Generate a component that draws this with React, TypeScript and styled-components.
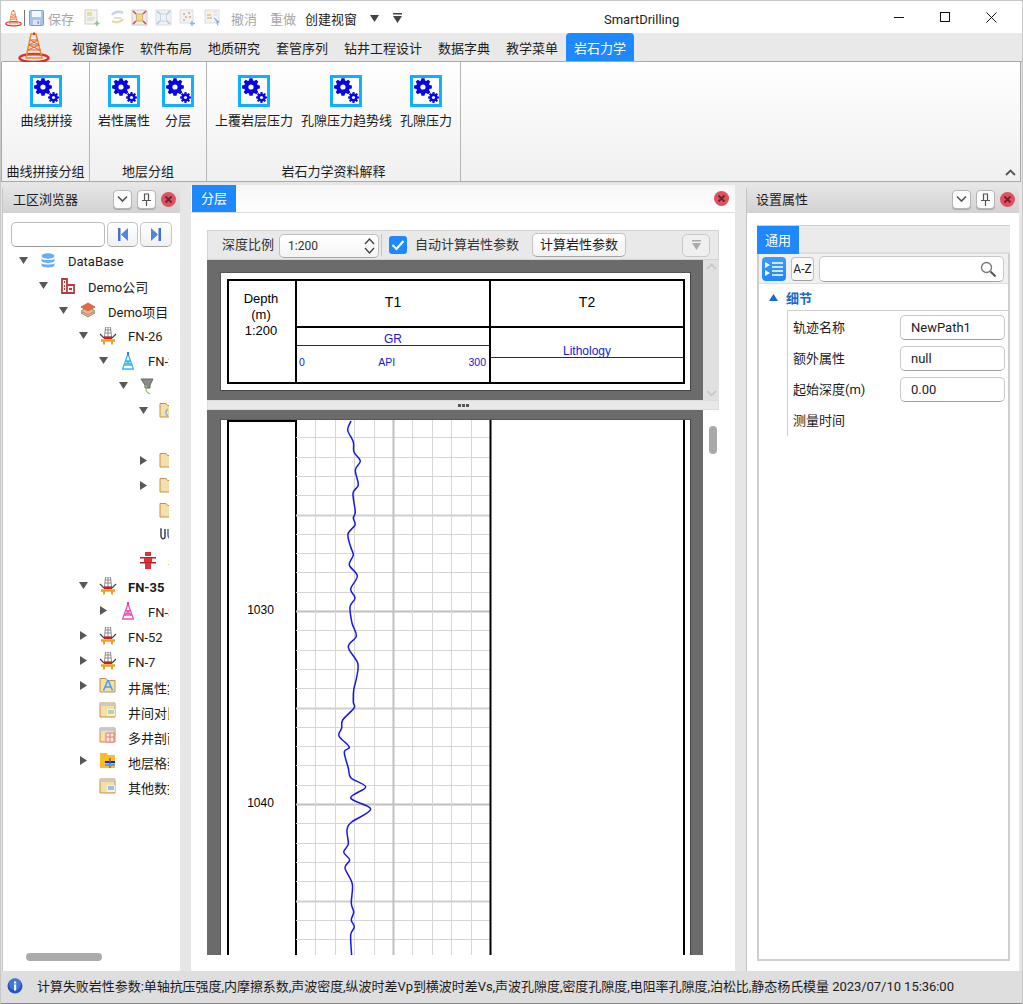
import React from "react";
import styled, { createGlobalStyle } from "styled-components";

const UI = `Roboto, "Noto Sans CJK SC", sans-serif`;
const BLUE = "#1e88ff";

const Global = createGlobalStyle`
  html, body { margin: 0; padding: 0; background: #e6e6e6; }
  * { box-sizing: border-box; }
  #root { width: 1023px; height: 1004px; overflow: hidden; }
`;

const Win = styled.div`
  width: 1023px; height: 1004px; display: flex; flex-direction: column;
  background: #e6e6e6; font: 13px ${UI}; color: #1c1c1c;
  border-top: 1px solid #c8c8c8; border-left: 1px solid #c8c8c8; border-right: 1px solid #c8c8c8;
  overflow: hidden;
`;
const TitleBar = styled.div`
  height: 32px; flex: none; background: #fff; display: flex; align-items: center;
`;
const Qat = styled.div`
  width: 603px; flex: none; display: flex; align-items: center; height: 100%; padding-left: 4px; padding-top: 2px;
`;
const QatSep = styled.span`width: 1px; height: 16px; background: #777; margin: 0 4px 0 2px;`;
const QatText = styled.span<{ $on?: boolean; $l: number }>`
  color: ${p => (p.$on ? "#222" : "#a8a8a8")}; margin-left: ${p => p.$l}px; white-space: nowrap;
`;
const QatIcon = styled.span<{ $l: number }>`
  margin-left: ${p => p.$l}px; display: flex;
`;
const Title = styled.div`font-size: 13px; color: #222; padding-top: 5px;`;
const WinCtrls = styled.div`margin-left: auto; display: flex; align-items: center; height: 100%; padding-right: 8px;`;
const WinBtn = styled.span<{ $w: number }>`width: ${p => p.$w}px; display: flex; justify-content: center;`;

const Menu = styled.div`
  height: 29px; flex: none; background: #e9e9e9; display: flex; align-items: stretch; margin-left: 1px;
  border-bottom: 1px solid #a9a9a9; padding-left: 16px;
`;
const LogoSlot = styled.div`width: 46px; flex: none; display: flex; align-items: center; margin-bottom: -2px;`;
const MenuItem = styled.div<{ $on?: boolean }>`
  padding: 0 8px; display: flex; align-items: center; border-radius: 4px 4px 0 0; white-space: nowrap;
  color: ${p => (p.$on ? "#fff" : "#1c1c1c")}; background: ${p => (p.$on ? BLUE : "transparent")};
`;

const Ribbon = styled.div`
  height: 120px; flex: none; display: flex; margin-right: 1px; position: relative;
  background: linear-gradient(#fff, #f0f0f0);
  border-bottom: 1px solid #a9a9a9; border-right: 1px solid #a9a9a9; border-left: 1px solid #a9a9a9;
`;
const Group = styled.div<{ $w: number }>`
  width: ${p => p.$w}px; flex: none; border-right: 1px solid #b5b5b5; display: flex; flex-direction: column;
`;
const GroupBody = styled.div<{ $shift?: number }>`
  flex: 1; display: flex; justify-content: center; gap: 8px; padding: 13px 0 0 ${p => p.$shift ?? 0}px;
`;
const GroupName = styled.div`height: 20px; flex: none; text-align: center; line-height: 22px; white-space: nowrap;`;
const RBtn = styled.div`
  min-width: 40px; display: flex; flex-direction: column; align-items: center; gap: 3px; white-space: nowrap;
`;
const Collapse = styled.span`position: absolute; right: 4px; bottom: 5px; display: flex;`;

const Body = styled.div`
  flex: 1; min-height: 0; display: flex; padding: 3px 3px 0 1px; gap: 11px;
`;
const Side = styled.div<{ $w: number }>`
  width: ${p => p.$w}px; flex: none; display: flex; flex-direction: column; background: #fff;
  border-left: 1px solid #c4c4c4; border-top-left-radius: 5px; border-top-right-radius: 5px;
`;
const SideHead = styled.div<{ $pad: number }>`
  height: 28px; flex: none; display: flex; align-items: center; padding: 0 4px 0 ${p => p.$pad}px;
  background: linear-gradient(#e6e6e6, #d2d2d2); border-radius: 5px 5px 0 0;
`;
const SideTitle = styled.div`flex: 1; white-space: nowrap; margin-top: -2px;`;
const HeadBtn = styled.span`
  width: 19px; height: 19px; margin-right: 5px; border: 1px solid #b5b5b5; border-radius: 4px; background: #fdfdfd;
  display: flex; align-items: center; justify-content: center; box-shadow: 0 1px 0 #aaa;
`;
const CloseDot = styled.span`
  width: 15px; height: 15px; flex: none; border-radius: 50%; background: #e2505f; color: #6c2230;
  display: flex; align-items: center; justify-content: center;
`;

const SearchRow = styled.div`display: flex; gap: 2px; padding: 9px 8px 0 8px; height: 34px; flex: none;`;
const SearchInput = styled.div`
  width: 95px; border: 1px solid #bbb; border-bottom-color: #999; border-radius: 5px; background: #fff;
`;
const NavBtn = styled.div`
  width: 32px; border: 1px solid #c4c4c4; border-bottom-color: #a5a5a5; border-radius: 5px;
  background: linear-gradient(#fff, #f0f0f0); display: flex; align-items: center; justify-content: center;
`;
const Tree = styled.div`width: 158px; margin-left: 8px; padding-top: 2px; flex: 1; overflow: hidden;`;
const TreeRow = styled.div<{ $level: number }>`
  height: 25.05px; display: flex; align-items: center; padding-left: ${p => 7 + 20 * p.$level}px; white-space: nowrap;
`;
const ArrowSlot = styled.span`width: 10px; flex: none; display: flex; justify-content: center; margin-top: -3px;`;
const TreeIcon = styled.span`width: 18px; height: 18px; flex: none; margin-left: 11px; display: flex; margin-top: -2px;`;
const TreeLabel = styled.span<{ $b?: boolean }>`margin-left: 11px; font-weight: ${p => (p.$b ? 700 : 400)};`;
const HScroll = styled.div`height: 18px; flex: none; padding: 0 0 0 23px;`;
const HThumb = styled.div`width: 76px; height: 8px; border-radius: 4px; background: #ababab;`;

const Center = styled.div`
  width: 544px; flex: none; display: flex; flex-direction: column; background: #fff;
`;
const TabHead = styled.div`
  height: 28px; flex: none; display: flex; align-items: center; justify-content: space-between;
  padding: 0 6px 0 1px; border-bottom: 1px solid #dcdcdc; background: linear-gradient(#f6f6f6, #fff);
`;
const Tab = styled.div`
  width: 44px; height: 27px; background: ${BLUE}; color: #fff; display: flex; align-items: center; justify-content: center; padding-bottom: 2px;
`;
const Work = styled.div`flex: 1; min-height: 0; display: flex; flex-direction: column; padding: 17px 16px 16px;`;
const ToolBar = styled.div`
  height: 30px; flex: none; display: flex; align-items: center; background: #e9e9e9;
  border: 1px solid #d4d4d4; padding-left: 14px; color: #333;
`;
const ToolLabel = styled.span`margin-top: -3px; white-space: nowrap;`;
const Combo = styled.div`
  width: 100px; height: 24px; margin: 2px 0 0 5px; padding: 0 3px 0 8px; border: 1px solid #c0c0c0; border-bottom-color: #a5a5a5;
  border-radius: 5px; background: linear-gradient(#fff, #f4f4f4); display: flex; align-items: center; justify-content: space-between;
  font-size: 12px;
`;
const TbSep = styled.span`width: 1px; height: 22px; background: #c6c6c6; margin: 0 7px 0 2px;`;
const Check = styled.span`
  width: 18px; height: 18px; border-radius: 3px; background: ${BLUE}; display: flex; align-items: center; justify-content: center;
`;
const CheckLabel = styled(ToolLabel)`margin-left: 8px;`;
const TbButton = styled.div`
  width: 94px; height: 24px; margin-left: 13px; border: 1px solid #c4c4c4; border-bottom-color: #a5a5a5; border-radius: 5px;
  background: linear-gradient(#fff, #f2f2f2); display: flex; align-items: center; justify-content: center; white-space: nowrap; color: #1c1c1c;
  padding-bottom: 3px;
`;
const TbDrop = styled.div`
  width: 28px; height: 23px; margin-left: 56px; border: 1px solid #c9c9c9; border-radius: 5px; background: #efefef;
  display: flex; align-items: center; justify-content: center;
`;

const PaneRow = styled.div<{ $h?: number }>`
  display: flex; flex: ${p => (p.$h ? "none" : "1")}; height: ${p => (p.$h ? `${p.$h}px` : "auto")}; min-height: 0;
`;
const Dark = styled.div`flex: 1; min-width: 0; background: #6b6b6b; overflow: hidden;`;
const VBar = styled.div<{ $gray?: boolean }>`
  width: 16px; flex: none; background: ${p => (p.$gray ? "#e0e0e0" : "#fff")}; display: flex; flex-direction: column;
  justify-content: space-between; align-items: center; padding: 3px 0;
`;
const VThumb = styled.div`width: 8px; height: 28px; margin-top: 13px; margin-left: 4px; border-radius: 4px; background: #a9a9a9;`;
const Sheet = styled.div`
  margin: 12px 12px 9px 13px; height: 119px; background: #fff; padding: 6px 5px 6px 6px;
  border: 1px solid #444; border-left-color: #555; border-top-color: #555;
`;
const HeadTable = styled.div`
  height: 105px; display: grid; grid-template-columns: 68px 194px 1fr; grid-template-rows: 47px 1fr;
  border: 2px solid #000; font: 12px "Liberation Sans", Arial, sans-serif; color: #000;
`;
const DepthHead = styled.div`
  grid-row: 1 / 3; border-right: 2px solid #000; text-align: center; font-size: 13px; line-height: 16px; padding-top: 10px; padding-right: 2px;
`;
const TrackName = styled.div<{ $end?: boolean }>`
  display: flex; align-items: center; justify-content: center; font-size: 14px; padding-bottom: 4px;
  border-bottom: 2px solid #000; border-right: ${p => (p.$end ? "none" : "2px solid #000")};
`;
const CurveCell = styled.div<{ $end?: boolean }>`
  color: #1616e0; border-right: ${p => (p.$end ? "none" : "2px solid #000")}; display: flex; flex-direction: column;
`;
const CurveLabel = styled.div<{ $h: number }>`
  height: ${p => p.$h}px; flex: none; border-bottom: 1px solid #1616e0; text-align: center; line-height: 12px;
  display: flex; align-items: flex-end; justify-content: center;
`;
const Scale = styled.div`
  display: flex; justify-content: space-between; padding: 10px 3px 0 2px; font-size: 10.5px;
`;
const Splitter = styled.div`
  height: 10px; flex: none; background: #e8e8e8; border: 1px solid #dcdcdc; display: flex; justify-content: center; align-items: center; gap: 1px;
`;
const Grip = styled.span`width: 3px; height: 3px; background: #555;`;
const LogSheet = styled.div`
  margin: 9px 12px 0 13px; height: 100%; background: #fff; display: flex; padding-left: 6px; border-top: 1px solid #555; border-left: 1px solid #555;
  border-right: 1px solid #444;
`;
const DepthCol = styled.div`
  width: 70px; flex: none; border-left: 2px solid #000; border-top: 2px solid #000; border-right: 2px solid #000;
  font: 12px "Liberation Sans", Arial, sans-serif; color: #000; text-align: center; padding-top: 181px; padding-right: 3px;
`;
const DepthMark = styled.div`height: 14px; line-height: 14px; margin-bottom: 179px;`;
const TrackSvg = styled.svg`display: block; flex: none; margin-left: -1px;`;
const EmptyTrack = styled.div`flex: 1;`;
const RightEdge = styled.div`width: 2px; background: #000; margin-right: 5px; flex: none;`;

const PropBox = styled.div`
  margin: 12px 9px 10px 10px; flex: 1; min-height: 0; border: 1px solid #cfcfcf; border-width: 1px 2px 2px 2px; display: flex; flex-direction: column;
`;
const PropTabs = styled.div`height: 28px; flex: none; background: #ebebeb; border-bottom: 2px solid #ddd; margin: 0 -2px;`;
const PropTab = styled.div`width: 42px; height: 28px; background: ${BLUE}; color: #fff; display: flex; align-items: center; justify-content: center; padding-bottom: 2px;`;
const PropTools = styled.div`
  height: 30px; flex: none; display: flex; align-items: center; background: #f0f0f0; border-bottom: 1px solid #ddd; padding: 0 4px 0 3px; gap: 5px;
`;
const CatBtn = styled.div`
  width: 24px; height: 24px; border-radius: 4px; background: linear-gradient(#3f9bf8, ${BLUE}); display: flex; align-items: center; justify-content: center;
`;
const AzBtn = styled.div`
  width: 23px; height: 24px; border: 1px solid #c0c0c0; border-bottom-color: #a0a0a0; border-radius: 4px; background: #fafafa;
  display: flex; align-items: center; justify-content: center; font-size: 12px; color: #222;
`;
const PropSearch = styled.div`
  flex: 1; height: 26px; border: 1px solid #c8c8c8; border-bottom-color: #a0a0a0; border-radius: 5px; background: #fff;
  display: flex; align-items: center; justify-content: flex-end; padding-right: 7px;
`;
const SectionHead = styled.div`
  height: 26px; flex: none; display: flex; align-items: center; color: #1a68d0; font-weight: 700; padding-left: 10px; gap: 8px;
`;
const PropList = styled.div`margin-left: 28px; border-left: 1px solid #cfcfcf; border-top: 1px solid #cfcfcf; padding: 1px 0 0 5px;`;
const PropRow = styled.div`height: 31px; display: flex; align-items: center;`;
const PropName = styled.div`width: 107px; flex: none; white-space: nowrap; margin-top: -2px;`;
const PropValue = styled.div`
  width: 105px; height: 25px; border: 1px solid #c8c8c8; border-bottom-color: #a0a0a0; border-radius: 5px; padding-left: 10px;
  display: flex; align-items: center; background: #fff; color: #222;
`;

const Status = styled.div`
  height: 33px; flex: none; display: flex; align-items: center; background: #dedede; padding-left: 6px; padding-bottom: 3px;
  border-bottom: 1px solid #888; font-size: 13px; white-space: nowrap; letter-spacing: -0.045px;
`;
const StatusText = styled.span`margin-left: 14px;`;

/* ---------- drawings ---------- */
const gearPath = (cx: number, cy: number, R: number, r: number, n: number) => {
  const pts: string[] = [];
  for (let i = 0; i < n; i++) {
    const a = (i * 2 * Math.PI) / n;
    const w = Math.PI / n / 1.6;
    [[r, a - w * 1.25], [R, a - w * 0.7], [R, a + w * 0.7], [r, a + w * 1.25]].forEach(([rad, t]) =>
      pts.push(`${(cx + rad * Math.cos(t)).toFixed(2)} ${(cy + rad * Math.sin(t)).toFixed(2)}`));
  }
  return "M" + pts.join("L") + "Z";
};
const GearIcon = () => (
  <svg width="32" height="32" viewBox="0 0 32 32">
    <rect x="1.5" y="1.5" width="29" height="29" fill="#fff" stroke="#0cb1ff" strokeWidth="3" />
    <path d={gearPath(13, 12, 9, 6.8, 8)} fill="#0505e6" />
    <circle cx="13" cy="12" r="2.6" fill="#fff" />
    <path d={gearPath(23.5, 22.5, 5.5, 4, 8)} fill="#0505e6" />
    <circle cx="23.5" cy="22.5" r="1.6" fill="#fff" />
  </svg>
);
const Logo = ({ s }: { s: number }) => (
  <svg width={s} height={s} viewBox="0 0 32 32">
    <ellipse cx="16" cy="26" rx="14.5" ry="4" fill="none" stroke="#d8302a" strokeWidth="2.4" />
    <path d="M13 2h5l6 24H8z" fill="none" stroke="#f08a2a" strokeWidth="1.5" />
    <path d="M12 8h8M10.6 13h10.8M9.3 18h13.4M8 23h16M12 8l9 5M20 8l-9 5M11 13l11 5M21 13L10 18" stroke="#e8602a" strokeWidth="1" fill="none" />
    <path d="M15 1l1-1 1 1v2h-2z" fill="#d8302a" />
  </svg>
);
const Save = () => (
  <svg width="15" height="16" viewBox="0 0 15 16">
    <rect x=".5" y=".5" width="14" height="15" rx="1" fill="#a9c4ec" stroke="#7f9cc8" />
    <rect x="3" y="1" width="9" height="6" fill="#f4f7fb" />
    <rect x="4" y="10" width="7" height="5" fill="#dfe6f0" />
    <rect x="8.5" y="11" width="1.5" height="3" fill="#7f9cc8" />
  </svg>
);
const DocIcon = ({ kind }: { kind: number }) => {
  const sets: Record<number, React.ReactNode> = {
    0: (<><rect x="1" y="1" width="12" height="14" fill="#f3f3ec" stroke="#d0d0d0" /><rect x="3" y="3" width="5" height="4" fill="#e6dca8" /><path d="M3 9h8M3 11h6" stroke="#cfcfcf" /><path d="M13 12v5M10.5 14.5h5" stroke="#8fbf8f" strokeWidth="1.5" /></>),
    1: (<><path d="M3 6a7 5 0 0 1 11-2" fill="none" stroke="#c6d4ea" strokeWidth="2.5" /><path d="M14 10a7 5 0 0 1-11 2" fill="none" stroke="#e8dca0" strokeWidth="2.5" /><path d="M5 9h7" stroke="#dcdcdc" strokeWidth="2" /></>),
    2: (<><rect x="1" y="1" width="15" height="15" fill="#ececec" stroke="#cfcfcf" /><rect x="5.5" y="5" width="6" height="7" fill="#f1d595" stroke="#d6b56a" /><path d="M2 2l3 3M15 2l-3 3M2 15l3-3M15 15l-3-3" stroke="#d84a3a" strokeWidth="1.5" /></>),
    3: (<><rect x="1" y="1" width="15" height="15" fill="#f1f1f1" stroke="#dedede" /><rect x="5.5" y="5" width="6" height="7" fill="#eef2f8" stroke="#c5d5ea" /><path d="M2 2l3 3M15 2l-3 3M2 15l3-3M15 15l-3-3" stroke="#a8c6ee" strokeWidth="1.5" /></>),
    4: (<><rect x="1" y="1" width="13" height="13" fill="#f2f2f2" stroke="#dedede" /><path d="M4 5h2M9 4h2M6 8h2M4 11h2M10 8h2" stroke="#dcb9a8" strokeWidth="1.8" /><path d="M13 12v5M11 14.5h5" stroke="#8fb6e6" strokeWidth="1.5" /></>),
    5: (<><rect x="1" y="1" width="14" height="13" fill="#f2f2f2" stroke="#dedede" /><path d="M3 6h4M3 9h5" stroke="#e8cf90" strokeWidth="2" /><path d="M10 3h3M10 6h3" stroke="#d8d8d8" /><path d="M10 9l5 4-2 .5 1 3" fill="#9dc1ec" stroke="#7ba6de" /></>),
  };
  return <svg width="17" height="18" viewBox="0 0 17 18">{sets[kind]}</svg>;
};
const Close = () => (
  <svg width="9" height="9" viewBox="0 0 9 9"><path d="M1.5 1.5l6 6M7.5 1.5l-6 6" stroke="currentColor" strokeWidth="1.8" /></svg>
);
const ChevronDown = () => (
  <svg width="11" height="8" viewBox="0 0 11 8"><path d="M1 1.5l4.5 4.5L10 1.5" fill="none" stroke="#555" strokeWidth="1.6" /></svg>
);
const Pin = () => (
  <svg width="11" height="13" viewBox="0 0 11 13"><path d="M3 1h5M3.5 1v6M7.5 1v6M1 7.5h9M5.5 8v5" fill="none" stroke="#555" strokeWidth="1.2" /></svg>
);
const Nav = ({ flip }: { flip?: boolean }) => (
  <svg width="10" height="13" viewBox="0 0 10 13" style={flip ? { transform: "scaleX(-1)" } : undefined}>
    <rect x="0" y="0" width="2.5" height="13" fill="#3f6fd0" />
    <path d="M10 0v13L3 6.5z" fill="#4c86e0" />
  </svg>
);
const Arrow = ({ kind }: { kind: string }) =>
  kind === "d" ? (
    <svg width="9" height="7" viewBox="0 0 9 7"><path d="M0 0h9L4.5 7z" fill="#585858" /></svg>
  ) : kind === "r" ? (
    <svg width="7" height="9" viewBox="0 0 7 9"><path d="M0 0v9l7-4.5z" fill="#585858" /></svg>
  ) : null;

const Folder = ({ children, color = "#f3dfa8" }: { children?: React.ReactNode; color?: string }) => (
  <>
    <path d="M1 1.5h6l1.5 2H16V15H1z" fill={color} stroke="#c98f48" />
    {children}
  </>
);
const TreeGlyph = ({ kind }: { kind: string }) => {
  const rigBase = (
    <g fill="none">
      <path d="M6.5 0h5l1 10h-7zM6 3h6M6 6h6M9 0v10" stroke="#8a8a8a" strokeWidth="1" />
      <path d="M1 7l4 4M17 7l-4 4" stroke="#444" strokeWidth="1.2" />
      <rect x="5" y="9.5" width="8" height="2.5" fill="#c82020" />
      <path d="M2 13.500h14" stroke="#f0a020" strokeWidth="2.500" />
      <path d="M5 13v4.500M13 13v4.500" stroke="#f0a020" strokeWidth="2" />
    </g>
  );
  const tower = (c: string, h: string) => (
    <g fill="none" stroke={c} strokeWidth="1.3">
      <path d="M9 2L3.500 17M9 2l5.500 15M6.500 9h5M5 13h8M6.500 9L13 13M11.500 9L5 13M3 17h12" />
      <path d="M8 0h2v3H8z" fill={h} stroke="none" />
    </g>
  );
  const m: Record<string, React.ReactNode> = {
    db: (<g fill="#68aef5"><ellipse cx="9" cy="4" rx="6.5" ry="2.8" /><path d="M2.5 6.5c1 2 12 2 13 0v2.5c-1 2.5-12 2.5-13 0z" /><path d="M2.5 11c1 2 12 2 13 0v2.5c-1 2.5-12 2.5-13 0z" /></g>),
    co: (<g fill="none" stroke="#bd3a3c" strokeWidth="1.8"><path d="M3 2h5v14H3zM8 8h7v8H8zM5 5h1M5 9h1M5 12h1M10 12h3" /></g>),
    pr: (<g strokeWidth="1"><path d="M9 7l7 4-7 4-7-4z" fill="#d8b8a8" stroke="#a58f80" /><path d="M9 5l7 4-7 4-7-4z" fill="#e8b48e" stroke="#b88f70" /><path d="M9 1l7 4-7 4-7-4z" fill="#e8683c" stroke="#c8724c" /></g>),
    rig: rigBase,
    tw: tower("#39b8ee", "#3a7ad8"),
    pk: tower("#f050b0", "#e04090"),
    fn: (<g><path d="M2 2h12l-3 6v3H6V8z" fill="#8b8b8b" stroke="#666" /><path d="M7 8v4c0 3 2 4 4 5" fill="none" stroke="#8cc06a" strokeWidth="1.2" /></g>),
    fd: (<Folder />),
    fdc: (<Folder><path d="M9 7c-3 2-3 5 0 7" fill="none" stroke="#7ea8d8" strokeWidth="1.2" /></Folder>),
    u: (<g fill="none" strokeWidth="1.5"><path d="M2 2v7c0 3 3 4 4 1V2" stroke="#444" /><path d="M3 2h-2M9 2v6c0 4 4 5 5 6" stroke="#5a6fc0" /></g>),
    red: (<g fill="#e0303a"><rect x="6" y="0" width="6" height="4" /><rect x="1" y="5" width="16" height="1.5" fill="#b82028" /><rect x="5" y="6" width="8" height="4" /><rect x="1" y="10" width="16" height="1.5" fill="#b82028" /><rect x="6" y="11" width="6" height="6" /></g>),
    fa: (<g><Folder /><path d="M9 3L4.5 13.5M9 3l4.5 10.5M6 10h6" fill="none" stroke="#4a9ff0" strokeWidth="1.6" /></g>),
    fg: (<g><path d="M1 1h15v14H1z" fill="#f3dfa8" stroke="#c98f48" /><rect x="1" y="1" width="15" height="3" fill="#c9c9c9" /><rect x="8" y="7" width="8" height="7" fill="#eef3e8" /><path d="M9 9h6M9 11h6" stroke="#7fb07f" /></g>),
    fm: (<g><path d="M1 1h15v14H1z" fill="#f3dfa8" stroke="#c98f48" /><rect x="1" y="1" width="15" height="3" fill="#c9c9c9" /><path d="M7 6h8v9H7zM11 6v9M7 10h8" fill="#fbeaea" stroke="#e07a7a" /></g>),
    fy: (<g><path d="M1 1h7l1 2h7v13H1z" fill="#fdbd28" /><path d="M6 10h10" stroke="#1020e0" strokeWidth="2" /><path d="M11 6v10" stroke="#6a6a6a" strokeWidth="1.5" /><rect x="6" y="12" width="10" height="2" fill="#58a0e8" /></g>),
    fo: (<g><path d="M1 1h15v14H1z" fill="#f3dfa8" stroke="#c98f48" /><rect x="1" y="1" width="15" height="3" fill="#c9c9c9" /><rect x="8" y="7" width="8" height="7" fill="#eef2f8" /><path d="M9 9h6M9 11h6" stroke="#5a86c8" /></g>),
  };
  return <svg width="18" height="18" viewBox="0 0 18 18">{m[kind]}</svg>;
};

type RowT = { l: number; a?: string; i?: string; t?: string; b?: boolean };
const rows: RowT[] = [
  { l: 0, a: "d", i: "db", t: "DataBase" },
  { l: 1, a: "d", i: "co", t: "Demo公司" },
  { l: 2, a: "d", i: "pr", t: "Demo项目" },
  { l: 3, a: "d", i: "rig", t: "FN-26" },
  { l: 4, a: "d", i: "tw", t: "FN-26" },
  { l: 5, a: "d", i: "fn" },
  { l: 6, a: "d", i: "fdc" },
  { l: 6 },
  { l: 6, a: "r", i: "fd" },
  { l: 6, a: "r", i: "fd" },
  { l: 6, i: "fd" },
  { l: 6, i: "u" },
  { l: 5, i: "red", t: "井" },
  { l: 3, a: "d", i: "rig", t: "FN-35", b: true },
  { l: 4, a: "r", i: "pk", t: "FN-35" },
  { l: 3, a: "r", i: "rig", t: "FN-52" },
  { l: 3, a: "r", i: "rig", t: "FN-7" },
  { l: 3, a: "r", i: "fa", t: "井属性集" },
  { l: 3, i: "fg", t: "井间对比" },
  { l: 3, i: "fm", t: "多井剖面" },
  { l: 3, a: "r", i: "fy", t: "地层格架" },
  { l: 3, i: "fo", t: "其他数据" },
];

const curvePts: [number, number][] = [
  [55, 0], [51.7, 9], [57.3, 21], [58, 31], [64.3, 40], [59.3, 49], [62.3, 64], [57, 72], [59.3, 91], [57.3, 97],
  [59, 104], [52, 113], [54.7, 126], [57.3, 134], [53.3, 144], [61.3, 155], [54.7, 168], [59, 177], [54, 186],
  [56, 202], [60.3, 215], [52.3, 226], [61.7, 242], [60.7, 256], [57.7, 269], [57.3, 281], [58, 287], [46.7, 299],
  [45.7, 307], [43, 315], [53.3, 326], [48.3, 331], [52.3, 347], [55, 357], [69.7, 366], [54.7, 377], [74.7, 388],
  [55.7, 401], [51, 409], [52.3, 423], [47.7, 431], [53.7, 439], [49, 447], [56.3, 463], [55.3, 482], [57.7, 491],
  [55.3, 499], [58.3, 506], [54.7, 514], [55.7, 535],
];
const smooth = (p: [number, number][]) => {
  let d = `M${p[0][0]} ${p[0][1] + 1}`;
  for (let i = 0; i < p.length - 1; i++) {
    const a = p[Math.max(0, i - 1)], b = p[i], c = p[i + 1], e = p[Math.min(p.length - 1, i + 2)];
    d += `C${(b[0] + (c[0] - a[0]) / 6).toFixed(1)} ${(b[1] + 1 + (c[1] - a[1]) / 6).toFixed(1)} ${(c[0] - (e[0] - b[0]) / 6).toFixed(1)} ${(c[1] + 1 - (e[1] - b[1]) / 6).toFixed(1)} ${c[0]} ${c[1] + 1}`;
  }
  return d;
};
const LogTrack = () => {
  const vs = Array.from({ length: 9 }, (_, i) => Math.round(19.4 * (i + 1)) + 0.5);
  const hs = Array.from({ length: 28 }, (_, i) => i);
  return (
    <TrackSvg width="196" height="535" viewBox="0 0 196 535">
      {hs.map(i => {
        const y = Math.round(17.3 + 19.3 * i) + 0.5;
        const major = i % 10 === 9;
        const mid = i % 5 === 4;
        return <line key={i} x1="0" x2="194" y1={y} y2={y} stroke={major ? "#c0c0c0" : mid ? "#cfcfcf" : "#d6d6d6"} strokeWidth={major ? 2 : mid ? 2 : 1} />;
      })}
      {vs.map((x, i) => (
        <line key={i} x1={x} x2={x} y1="0" y2="535" stroke={i === 4 ? "#c0c0c0" : "#d6d6d6"} strokeWidth={i === 4 ? 2 : 1} />
      ))}
      <rect x="193.5" y="0" width="2" height="535" fill="#000" />
      <path d={smooth(curvePts)} fill="none" stroke="#1616e8" strokeWidth="1.5" />
    </TrackSvg>
  );
};

export default function App() {
  return (
    <Win>
      <Global />
      <TitleBar>
        <Qat>
          <Logo s={17} />
          <QatSep />
          <Save />
          <QatText $l={4}>保存</QatText>
          <QatIcon $l={10}><DocIcon kind={0} /></QatIcon>
          <QatIcon $l={8}><DocIcon kind={1} /></QatIcon>
          <QatIcon $l={5}><DocIcon kind={2} /></QatIcon>
          <QatIcon $l={7}><DocIcon kind={3} /></QatIcon>
          <QatIcon $l={7}><DocIcon kind={4} /></QatIcon>
          <QatIcon $l={8}><DocIcon kind={5} /></QatIcon>
          <QatText $l={10}>撤消</QatText>
          <QatText $l={13}>重做</QatText>
          <QatText $on $l={9}>创建视窗</QatText>
          <QatIcon $l={13}><svg width="9" height="7" viewBox="0 0 9 7"><path d="M0 0h9L4.5 7z" fill="#444" /></svg></QatIcon>
          <QatIcon $l={14}><svg width="9" height="10" viewBox="0 0 9 10"><path d="M0 0h9v1.5H0zM0 3h9L4.5 10z" fill="#444" /></svg></QatIcon>
        </Qat>
        <Title>SmartDrilling</Title>
        <WinCtrls>
          <WinBtn $w={46}><svg width="10" height="1" viewBox="0 0 10 1"><rect width="10" height="1" fill="#111" /></svg></WinBtn>
          <WinBtn $w={46}><svg width="10" height="10" viewBox="0 0 10 10"><rect x=".5" y=".5" width="9" height="9" fill="none" stroke="#111" /></svg></WinBtn>
          <WinBtn $w={46}><svg width="11" height="11" viewBox="0 0 11 11"><path d="M.5.5l10 10M10.5.5l-10 10" stroke="#111" /></svg></WinBtn>
        </WinCtrls>
      </TitleBar>

      <Menu>
        <LogoSlot><Logo s={32} /></LogoSlot>
        {["视窗操作", "软件布局", "地质研究", "套管序列", "钻井工程设计", "数据字典", "教学菜单"].map(m => <MenuItem key={m}>{m}</MenuItem>)}
        <MenuItem $on>岩石力学</MenuItem>
      </Menu>

      <Ribbon>
        <Group $w={88}>
          <GroupBody $shift={2}><RBtn><GearIcon />曲线拼接</RBtn></GroupBody>
          <GroupName>曲线拼接分组</GroupName>
        </Group>
        <Group $w={117}>
          <GroupBody><RBtn><GearIcon />岩性属性</RBtn><RBtn><GearIcon />分层</RBtn></GroupBody>
          <GroupName>地层分组</GroupName>
        </Group>
        <Group $w={254}>
          <GroupBody><RBtn><GearIcon />上覆岩层压力</RBtn><RBtn><GearIcon />孔隙压力趋势线</RBtn><RBtn><GearIcon />孔隙压力</RBtn></GroupBody>
          <GroupName>岩石力学资料解释</GroupName>
        </Group>
        <Collapse><svg width="11" height="7" viewBox="0 0 11 7"><path d="M1 6l4.5-4.5L10 6" fill="none" stroke="#555" strokeWidth="1.8" /></svg></Collapse>
      </Ribbon>

      <Body>
        <Side $w={178}>
          <SideHead $pad={10}>
            <SideTitle>工区浏览器</SideTitle>
            <HeadBtn><ChevronDown /></HeadBtn>
            <HeadBtn><Pin /></HeadBtn>
            <CloseDot><Close /></CloseDot>
          </SideHead>
          <SearchRow>
            <SearchInput />
            <NavBtn><Nav /></NavBtn>
            <NavBtn><Nav flip /></NavBtn>
          </SearchRow>
          <Tree>
            {rows.map((r, i) => (
              <TreeRow key={i} $level={r.l}>
                <ArrowSlot>{r.a && <Arrow kind={r.a} />}</ArrowSlot>
                <TreeIcon>{r.i && <TreeGlyph kind={r.i} />}</TreeIcon>
                {r.t && <TreeLabel $b={r.b}>{r.t}</TreeLabel>}
              </TreeRow>
            ))}
          </Tree>
          <HScroll><HThumb /></HScroll>
        </Side>

        <Center>
          <TabHead>
            <Tab>分层</Tab>
            <CloseDot><Close /></CloseDot>
          </TabHead>
          <Work>
            <ToolBar>
              <ToolLabel>深度比例</ToolLabel>
              <Combo>
                1:200
                <svg width="11" height="18" viewBox="0 0 11 18"><path d="M1 7l4.5-5L10 7M1 11l4.5 5L10 11" fill="none" stroke="#444" strokeWidth="1.4" /></svg>
              </Combo>
              <TbSep />
              <Check><svg width="14" height="12" viewBox="0 0 14 12"><path d="M1.5 6l4 4L12.5 2" fill="none" stroke="#fff" strokeWidth="2.2" /></svg></Check>
              <CheckLabel>自动计算岩性参数</CheckLabel>
              <TbButton>计算岩性参数</TbButton>
              <TbDrop><svg width="9" height="10" viewBox="0 0 9 10"><path d="M0 0h9v1.5H0zM0 3h9L4.5 10z" fill="#aaa" /></svg></TbDrop>
            </ToolBar>
            <PaneRow $h={140}>
              <Dark>
                <Sheet>
                  <HeadTable>
                    <DepthHead>Depth<br />(m)<br />1:200</DepthHead>
                    <TrackName>T1</TrackName>
                    <TrackName $end>T2</TrackName>
                    <CurveCell>
                      <CurveLabel $h={18}>GR</CurveLabel>
                      <Scale><span>0</span><span>API</span><span>300</span></Scale>
                    </CurveCell>
                    <CurveCell $end>
                      <CurveLabel $h={30}>Lithology</CurveLabel>
                    </CurveCell>
                  </HeadTable>
                </Sheet>
              </Dark>
              <VBar $gray>
                <svg width="11" height="7" viewBox="0 0 11 7"><path d="M1 6l4.5-4.5L10 6" fill="none" stroke="#c4c4c4" strokeWidth="1.5" /></svg>
                <svg width="11" height="7" viewBox="0 0 11 7"><path d="M1 1l4.5 4.5L10 1" fill="none" stroke="#c4c4c4" strokeWidth="1.5" /></svg>
              </VBar>
            </PaneRow>
            <Splitter><Grip /><Grip /><Grip /></Splitter>
            <PaneRow>
              <Dark>
                <LogSheet>
                  <DepthCol>
                    <DepthMark>1030</DepthMark>
                    <DepthMark>1040</DepthMark>
                  </DepthCol>
                  <LogTrack />
                  <EmptyTrack />
                  <RightEdge />
                </LogSheet>
              </Dark>
              <VBar><VThumb /></VBar>
            </PaneRow>
          </Work>
        </Center>

        <Side $w={273}>
          <SideHead $pad={9}>
            <SideTitle>设置属性</SideTitle>
            <HeadBtn><ChevronDown /></HeadBtn>
            <HeadBtn><Pin /></HeadBtn>
            <CloseDot><Close /></CloseDot>
          </SideHead>
          <PropBox>
            <PropTabs><PropTab>通用</PropTab></PropTabs>
            <PropTools>
              <CatBtn>
                <svg width="18" height="16" viewBox="0 0 18 16"><path d="M7 2h11M7 6h11M7 10h11M7 14h11" stroke="#fff" strokeWidth="1.4" /><path d="M0 1l5 3-5 3zM0 9l5 3-5 3z" fill="#fff" /></svg>
              </CatBtn>
              <AzBtn>A-Z</AzBtn>
              <PropSearch>
                <svg width="16" height="16" viewBox="0 0 16 16"><circle cx="6.5" cy="6.5" r="5" fill="none" stroke="#777" strokeWidth="1.3" /><path d="M10.5 10.5l5 5" stroke="#555" strokeWidth="2" /></svg>
              </PropSearch>
            </PropTools>
            <SectionHead>
              <svg width="9" height="7" viewBox="0 0 9 7"><path d="M0 7h9L4.5 0z" fill="#1a68d0" /></svg>
              细节
            </SectionHead>
            <PropList>
              <PropRow><PropName>轨迹名称</PropName><PropValue>NewPath1</PropValue></PropRow>
              <PropRow><PropName>额外属性</PropName><PropValue>null</PropValue></PropRow>
              <PropRow><PropName>起始深度(m)</PropName><PropValue>0.00</PropValue></PropRow>
              <PropRow><PropName>测量时间</PropName></PropRow>
            </PropList>
          </PropBox>
        </Side>
      </Body>

      <Status>
        <svg width="16" height="16" viewBox="0 0 16 16">
          <circle cx="8" cy="8" r="7.5" fill="#2458c0" />
          <circle cx="8" cy="6" r="6" fill="#4f86e0" opacity=".7" />
          <rect x="7" y="6.5" width="2.2" height="6" fill="#fff" />
          <rect x="7" y="3.5" width="2.2" height="2" fill="#fff" />
        </svg>
        <StatusText>计算失败岩性参数:单轴抗压强度,内摩擦系数,声波密度,纵波时差Vp到横波时差Vs,声波孔隙度,密度孔隙度,电阻率孔隙度,泊松比,静态杨氏模量 2023/07/10 15:36:00</StatusText>
      </Status>
    </Win>
  );
}
